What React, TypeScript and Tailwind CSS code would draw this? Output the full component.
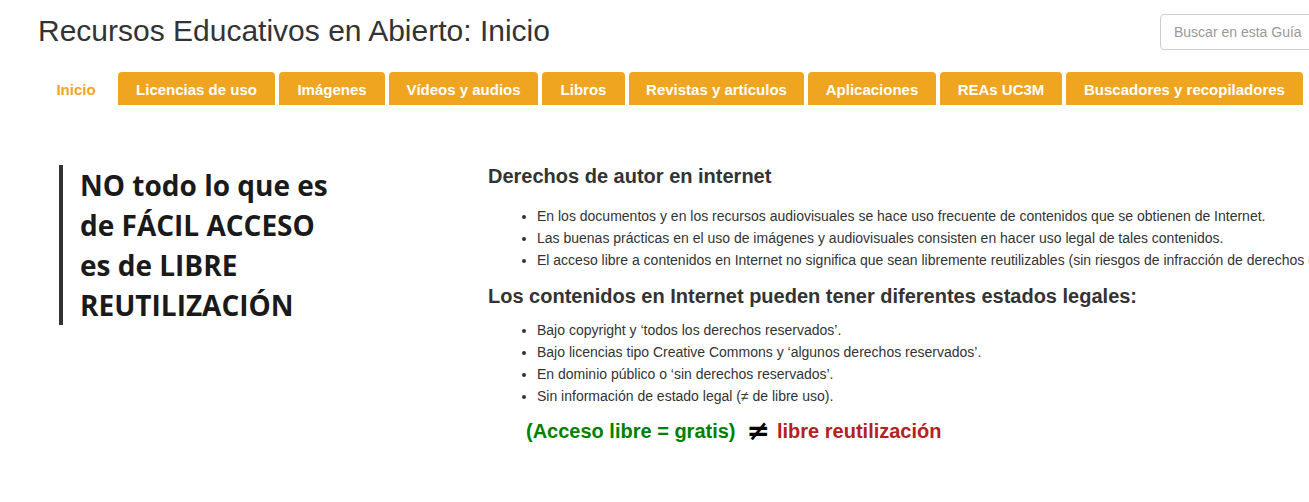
const tabs = [
  { label: "Licencias de uso", w: "w-[157px]" },
  { label: "Imágenes", w: "w-[106px]" },
  { label: "Vídeos y audios", w: "w-[149px]" },
  { label: "Libros", w: "w-[83px]" },
  { label: "Revistas y artículos", w: "w-[175px]" },
  { label: "Aplicaciones", w: "w-[128px]" },
  { label: "REAs UC3M", w: "w-[122px]" },
  { label: "Buscadores y recopiladores", w: "w-[237px]" },
]

const derechos = [
  "En los documentos y en los recursos audiovisuales se hace uso frecuente de contenidos que se obtienen de Internet.",
  "Las buenas prácticas en el uso de imágenes y audiovisuales consisten en hacer uso legal de tales contenidos.",
  "El acceso libre a contenidos en Internet no significa que sean libremente reutilizables (sin riesgos de infracción de derechos de autor).",
]

const estados = [
  "Bajo copyright y ‘todos los derechos reservados’.",
  "Bajo licencias tipo Creative Commons y ‘algunos derechos reservados’.",
  "En dominio público o ‘sin derechos reservados’.",
  "Sin información de estado legal (≠ de libre uso).",
]

export default function App() {
  return (
    <div className="w-[1309px] h-[502px] overflow-hidden bg-white font-['Liberation_Sans',Arial,sans-serif] text-[#333]">
      {/* header */}
      <div className="flex w-[1360px] pl-[38px] pt-[14px] items-start">
        <h1 className="flex-1 text-[30px] leading-[33px] font-normal text-[#333]">
          Recursos Educativos en Abierto: Inicio
        </h1>
        <div className="w-[200px] h-[36px] shrink-0 border border-[#ccc] rounded-[4px] flex items-center pl-[13px] text-[14px] text-[#999]">
          Buscar en esta Guía
        </div>
      </div>

      {/* tabs */}
      <div className="flex gap-[4px] pl-[38px] mt-[22px]">
        <div className="w-[76px] h-[33px] pt-[3px] flex items-center justify-center text-[15px] font-bold text-[#f0a520]">
          Inicio
        </div>
        {tabs.map((t) => (
          <div
            key={t.label}
            className={`${t.w} h-[33px] pt-[3px] rounded-t-[4px] bg-[#f0a520] flex items-center justify-center text-[15px] font-bold text-white whitespace-nowrap`}
          >
            {t.label}
          </div>
        ))}
      </div>

      {/* content */}
      <div className="flex mt-[60px] pl-[59px]">
        <div className="w-[429px] shrink-0">
          <div className="border-l-4 border-[#333] pl-[17px] font-['Open_Sans',sans-serif] font-bold text-[28px] leading-[40px] text-[#1a1a1a]">
            NO todo lo que es
            <br />
            de FÁCIL ACCESO
            <br />
            es de LIBRE
            <br />
            REUTILIZACIÓN
          </div>
        </div>

        <div className="shrink-0 w-[900px]">
          <h2 className="text-[20px] leading-[22px] font-bold text-[#333]">
            Derechos de autor en internet
          </h2>
          <ul className="list-disc pl-[49px] mt-[18px] text-[14px] leading-[22px]">
            {derechos.map((d) => (
              <li key={d} className="whitespace-nowrap">
                {d}
              </li>
            ))}
          </ul>
          <h2 className="text-[20px] leading-[22px] font-bold text-[#333] mt-[14px]">
            Los contenidos en Internet pueden tener diferentes estados legales:
          </h2>
          <ul className="list-disc pl-[49px] mt-[12px] text-[14px] leading-[22px]">
            {estados.map((d) => (
              <li key={d} className="whitespace-nowrap">
                {d}
              </li>
            ))}
          </ul>
          <p className="mt-[12px] pl-[38px] text-[20px] leading-[24px] font-bold flex items-center">
            <span className="text-[#008000]">(Acceso libre = gratis)</span>
            <span className="ml-[11px] mr-[7px] font-['DejaVu_Sans',sans-serif] text-[28px] leading-[24px] font-bold text-black">≠</span>
            <span className="text-[#b22222]">libre reutilización</span>
          </p>
        </div>
      </div>
    </div>
  )
}
